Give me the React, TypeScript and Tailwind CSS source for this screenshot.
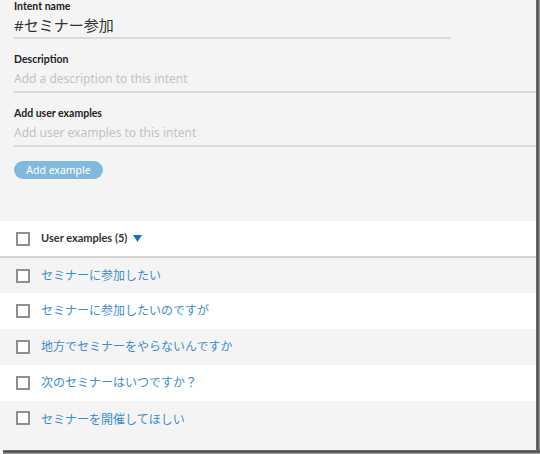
import React from "react";

const font = { fontFamily: '"Noto Sans", "Noto Sans CJK JP", sans-serif' };
const lato = { fontFamily: 'Lato, "Noto Sans", sans-serif' };

function Box() {
  return <div className="w-[14px] h-[14px] border-2 border-[#8f8f8f] bg-white shrink-0" />;
}

const examples = [
  "セミナーに参加したい",
  "セミナーに参加したいのですが",
  "地方でセミナーをやらないんですか",
  "次のセミナーはいつですか？",
  "セミナーを開催してほしい",
];

export default function App() {
  return (
    <div className="w-[540px] h-[454px] bg-white overflow-hidden" style={font}>
      <div className="flex h-[450px]">
        <div className="w-[536px] h-[450px] bg-[#f4f4f4] flex flex-col">
          <div className="pl-[14px] flex flex-col h-[221px]">
            <div className="h-[13px] leading-[13px] text-[10.5px] font-bold text-[#222]" style={lato}>Intent name</div>
            <div className="w-[437px] h-[26px] border-b-2 border-[#d9d9d9] text-[15px] leading-[24px] text-[#333]">
              #セミナー参加
            </div>
            <div className="mt-[14px] h-[13px] leading-[13px] text-[10.5px] font-bold text-[#222]" style={lato}>Description</div>
            <div className="h-[27px] border-b-2 border-[#d9d9d9] text-[12px] leading-[25px] text-[#c2c2c2]">
              Add a description to this intent
            </div>
            <div className="mt-[14px] h-[13px] leading-[13px] text-[10.5px] font-bold text-[#222]" style={lato}>Add user examples</div>
            <div className="h-[27px] border-b-2 border-[#d9d9d9] text-[12px] leading-[25px] text-[#c2c2c2]">
              Add user examples to this intent
            </div>
            <div className="mt-[14px] w-[89px] h-[18px] rounded-full bg-[#80b9dd] text-white text-[10.5px] leading-[18px] text-center">
              Add example
            </div>
          </div>
          <div className="h-[35px] bg-white flex items-center pl-[16px]">
            <Box />
            <span className="ml-[11px] text-[11px] font-bold text-[#333]" style={lato}>User examples (5)</span>
            <svg className="ml-[6px]" width="9" height="7" viewBox="0 0 9 7">
              <path d="M0 0 L9 0 L4.5 7 Z" fill="#1f70c1" />
            </svg>
          </div>
          <div className="h-[2px] bg-[#d4d4d4]" />
          {examples.map((t, i) => (
            <div
              key={t}
              className={`flex items-center pl-[16px] ${i === 4 ? "h-[49px] items-start pt-[10px]" : i === 0 ? "h-[35px]" : "h-[36px]"} ${i % 2 === 0 ? "bg-[#f4f4f4]" : "bg-white"}`}
            >
              <Box />
              <span className="ml-[11px] text-[12px] text-[#3d8ccb]">{t}</span>
            </div>
          ))}
        </div>
        <div className="w-[4px] h-[450px] bg-[linear-gradient(to_right,#8a8a8a,#444444_30%,#666666_60%,#b0b0b0)]" />
      </div>
      <div className="flex h-[4px]">
        <div className="w-[3px] bg-white" />
        <div className="flex-1 bg-[linear-gradient(to_bottom,#8a8a8a,#444444_30%,#666666_60%,#b0b0b0)]" />
      </div>
    </div>
  );
}
